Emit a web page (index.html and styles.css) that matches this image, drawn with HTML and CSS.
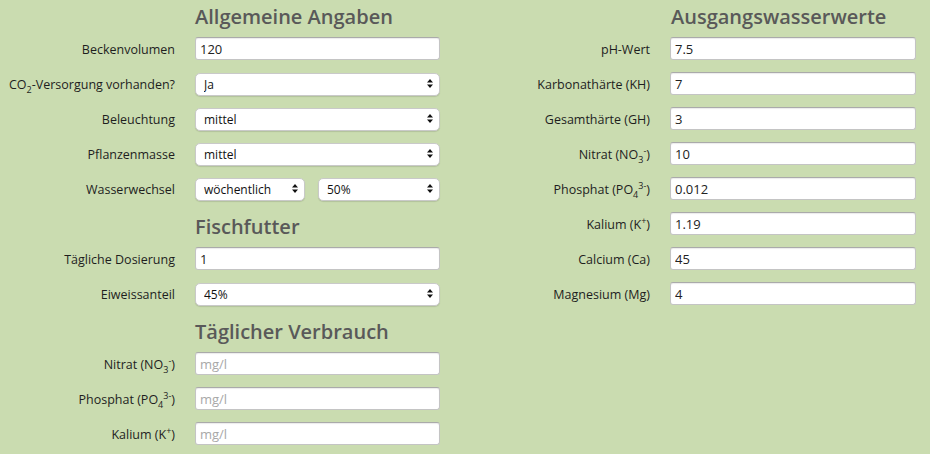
FILE: index.html
```html
<!DOCTYPE html>
<html lang="de">
<head>
    <meta charset="UTF-8">
    <meta name="viewport" content="width=device-width, initial-scale=1.0">
    <title>Dünger-Rechner</title>
    <link rel="stylesheet" href="styles.css">
</head>
<body>

<div class="page">
    <div class="column">
        <h2>Allgemeine Angaben</h2>
        <div class="row">
            <label for="volumen">Beckenvolumen</label>
            <input type="text" id="volumen" value="120">
        </div>
        <div class="row">
            <label for="co2">CO<sub>2</sub>-Versorgung vorhanden?</label>
            <div class="select">
                <select id="co2"><option>Ja</option><option>Nein</option></select>
                <svg class="arrows" width="6" height="9" viewBox="0 0 6 9"><path d="M3 0 L6 3.6 L0 3.6 Z M0 5.4 L6 5.4 L3 9 Z" fill="#111"/></svg>
            </div>
        </div>
        <div class="row">
            <label for="licht">Beleuchtung</label>
            <div class="select">
                <select id="licht"><option>mittel</option><option>niedrig</option><option>hoch</option></select>
                <svg class="arrows" width="6" height="9" viewBox="0 0 6 9"><path d="M3 0 L6 3.6 L0 3.6 Z M0 5.4 L6 5.4 L3 9 Z" fill="#111"/></svg>
            </div>
        </div>
        <div class="row">
            <label for="pflanzen">Pflanzenmasse</label>
            <div class="select">
                <select id="pflanzen"><option>mittel</option><option>wenig</option><option>viel</option></select>
                <svg class="arrows" width="6" height="9" viewBox="0 0 6 9"><path d="M3 0 L6 3.6 L0 3.6 Z M0 5.4 L6 5.4 L3 9 Z" fill="#111"/></svg>
            </div>
        </div>
        <div class="row">
            <label for="intervall">Wasserwechsel</label>
            <div class="split">
                <div class="select">
                    <select id="intervall"><option>wöchentlich</option><option>14-tägig</option></select>
                    <svg class="arrows" width="6" height="9" viewBox="0 0 6 9"><path d="M3 0 L6 3.6 L0 3.6 Z M0 5.4 L6 5.4 L3 9 Z" fill="#111"/></svg>
                </div>
                <div class="select">
                    <select id="menge"><option>50%</option><option>25%</option></select>
                    <svg class="arrows" width="6" height="9" viewBox="0 0 6 9"><path d="M3 0 L6 3.6 L0 3.6 Z M0 5.4 L6 5.4 L3 9 Z" fill="#111"/></svg>
                </div>
            </div>
        </div>

        <h2 class="sub">Fischfutter</h2>
        <div class="row">
            <label for="dosierung">Tägliche Dosierung</label>
            <input type="text" id="dosierung" value="1">
        </div>
        <div class="row">
            <label for="eiweiss">Eiweissanteil</label>
            <div class="select">
                <select id="eiweiss"><option>45%</option><option>30%</option></select>
                <svg class="arrows" width="6" height="9" viewBox="0 0 6 9"><path d="M3 0 L6 3.6 L0 3.6 Z M0 5.4 L6 5.4 L3 9 Z" fill="#111"/></svg>
            </div>
        </div>

        <h2 class="sub">Täglicher Verbrauch</h2>
        <div class="row">
            <label for="v-nitrat">Nitrat (NO<sub>3</sub><sup>-</sup>)</label>
            <input type="text" id="v-nitrat" placeholder="mg/l">
        </div>
        <div class="row">
            <label for="v-phosphat">Phosphat (PO<sub>4</sub><sup>3-</sup>)</label>
            <input type="text" id="v-phosphat" placeholder="mg/l">
        </div>
        <div class="row">
            <label for="v-kalium">Kalium (K<sup>+</sup>)</label>
            <input type="text" id="v-kalium" placeholder="mg/l">
        </div>
    </div>

    <div class="column right">
        <h2>Ausgangswasserwerte</h2>
        <div class="row">
            <label for="ph">pH-Wert</label>
            <input type="text" id="ph" value="7.5">
        </div>
        <div class="row">
            <label for="kh">Karbonathärte (KH)</label>
            <input type="text" id="kh" value="7">
        </div>
        <div class="row">
            <label for="gh">Gesamthärte (GH)</label>
            <input type="text" id="gh" value="3">
        </div>
        <div class="row">
            <label for="nitrat">Nitrat (NO<sub>3</sub><sup>-</sup>)</label>
            <input type="text" id="nitrat" value="10">
        </div>
        <div class="row">
            <label for="phosphat">Phosphat (PO<sub>4</sub><sup>3-</sup>)</label>
            <input type="text" id="phosphat" value="0.012">
        </div>
        <div class="row">
            <label for="kalium">Kalium (K<sup>+</sup>)</label>
            <input type="text" id="kalium" value="1.19">
        </div>
        <div class="row">
            <label for="calcium">Calcium (Ca)</label>
            <input type="text" id="calcium" value="45">
        </div>
        <div class="row">
            <label for="magnesium">Magnesium (Mg)</label>
            <input type="text" id="magnesium" value="4">
        </div>
    </div>
</div>

</body>
</html>
```

FILE: styles.css
```css
body {
    margin: 0;
    padding: 5px 0 0 0;
    background-color: #cadcb0;
    font-family: "Open Sans", Arial, sans-serif;
    color: #222;
}
.page {
    display: flex;
    align-items: flex-start;
}
.column {
    width: 440px;
}
.column.right {
    width: 441px;
    margin-left: 35px;
}
h2 {
    margin: 0 0 8px 0;
    padding-left: 195px;
    height: 24px;
    line-height: 24px;
    font-size: 20px;
    font-weight: 600;
    color: #595959;
    white-space: nowrap;
}
.column.right h2 {
    padding-left: 196px;
}
h2.sub {
    margin-top: 15px; /* se junta con el margin de la fila anterior */
}
.row {
    display: grid;
    grid-template-columns: 175px 1fr;
    column-gap: 20px;
    align-items: center;
    height: 23px;
    margin-bottom: 12px;
}
.row label {
    padding-top: 2px;
    text-align: right;
    font-size: 12.5px;
    color: #1e1e1e;
    white-space: nowrap;
}
.row sub,
.row sup {
    font-size: 9px;
    line-height: 0;
}
.row input {
    box-sizing: border-box;
    width: 100%;
    height: 23px;
    padding: 0 4px;
    border: 1px solid #c4c4c4;
    border-top-color: #aaa;
    border-radius: 3px;
    background: #fff;
    box-shadow: inset 0 1px 1px rgba(0, 0, 0, 0.08);
    font-family: "Open Sans", Arial, sans-serif;
    font-size: 13px;
    color: #222;
    outline: none;
}
.row input::placeholder {
    color: #a8a8a8;
}
.select {
    position: relative;
    height: 23px;
}
.select select {
    -webkit-appearance: none;
    appearance: none;
    box-sizing: border-box;
    width: 100%;
    height: 23px;
    padding: 0 20px 0 8px;
    border: 1px solid #c9c9c9;
    border-radius: 5px;
    background: #fff;
    box-shadow: 0 1px 1px rgba(0, 0, 0, 0.12);
    font-family: "Open Sans", Arial, sans-serif;
    font-size: 12px;
    color: #111;
    outline: none;
}
.select .arrows {
    position: absolute;
    right: 7px;
    top: 7px;
    pointer-events: none;
}
.split {
    display: grid;
    grid-template-columns: 110px 1fr;
    column-gap: 13px;
}
```
